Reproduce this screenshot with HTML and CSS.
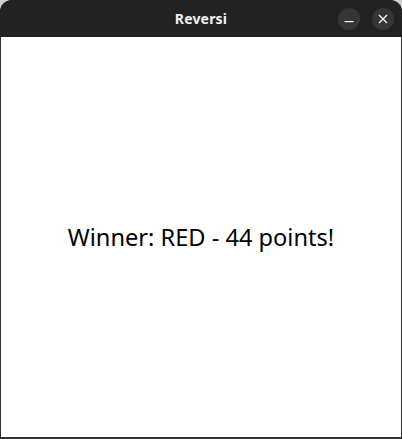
FILE: index.html
```html
<!DOCTYPE html>
<html>
<head>
<meta charset="utf-8">
<link rel="stylesheet" href="styles.css">
</head>
<body>
<div class="window">
  <header class="titlebar">
    <div class="title">Reversi</div>
    <div class="controls">
      <button class="ctl" aria-label="Minimize">
        <svg width="10" height="10" viewBox="0 0 10 10"><rect x="0.5" y="7" width="9" height="1.2" fill="#f0f0f0"/></svg>
      </button>
      <button class="ctl" aria-label="Close">
        <svg width="10" height="10" viewBox="0 0 10 10"><path d="M1 1 L9 9 M9 1 L1 9" stroke="#f0f0f0" stroke-width="1.4"/></svg>
      </button>
    </div>
  </header>
  <main class="content">
    <p class="message">Winner: RED - 44 points!</p>
  </main>
</div>
</body>
</html>
```
FILE: styles.css
```css
html, body {
  margin: 0;
  padding: 0;
}
body {
  width: 402px;
  height: 439px;
  background: #cfcfcf;
  overflow: hidden;
}
.window {
  height: 439px;
  display: flex;
  flex-direction: column;
  border-radius: 12px 12px 0 0;
  overflow: hidden;
  background: #222222;
}
.titlebar {
  position: relative;
  height: 37px;
  flex: none;
  background: #222222;
  display: flex;
  align-items: center;
  justify-content: center;
}
.title {
  color: #f2f2f2;
  font-family: "Noto Sans", "DejaVu Sans", sans-serif;
  font-weight: 700;
  font-size: 14px;
  letter-spacing: 0.2px;
}
.controls {
  position: absolute;
  right: 8px;
  top: 8px;
  display: flex;
  gap: 12px;
}
.ctl {
  width: 22px;
  height: 22px;
  border-radius: 50%;
  border: none;
  padding: 0;
  background: #363636;
  display: flex;
  align-items: center;
  justify-content: center;
}
.content {
  flex: 1;
  background: #ffffff;
  border: 1px solid #333333;
  border-top: none;
  border-bottom-width: 2px;
  display: flex;
  align-items: center;
  justify-content: center;
}
.message {
  margin: 0;
  color: #000000;
  font-family: "Noto Sans", "DejaVu Sans", sans-serif;
  font-size: 23.6px;
  font-weight: 400;
}
```
